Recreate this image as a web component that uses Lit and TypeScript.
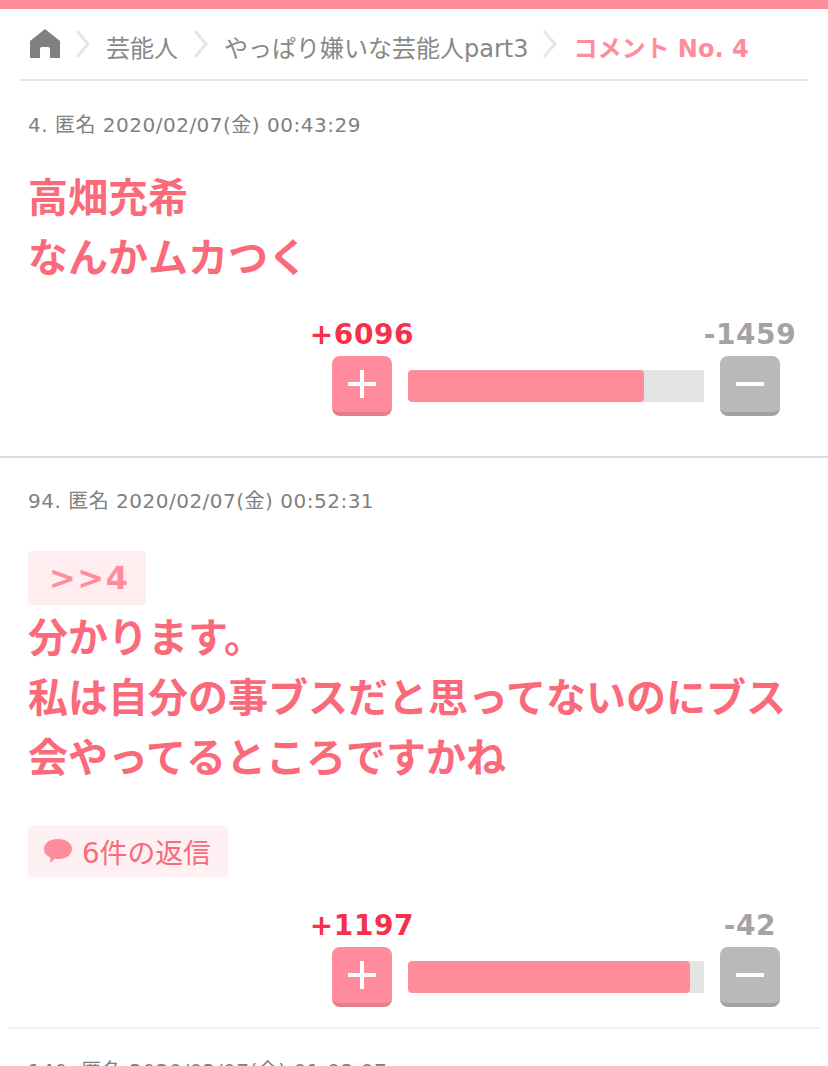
import { LitElement, html, css } from "lit";
import { customElement } from "lit/decorators.js";

interface Vote { plus: string; minus: string; pct: number; }

@customElement("app-root")
export class AppRoot extends LitElement {
  static styles = css`
    :host { display: block; background: #fff; height: 1066px; overflow: hidden;
      font-family: "DejaVu Sans", "Noto Sans CJK JP", sans-serif; }
    .top { height: 9px; background: #ff8c9b; }
    .crumbs { display: flex; align-items: center; height: 72px; margin: 0 20px; padding: 0 8px 0 9px;
      border-bottom: 2px solid #e8e8e8; box-sizing: border-box; font-size: 24px; color: #888; white-space: nowrap; }
    .crumbs span { padding-top: 4px; }
    .home { width: 32px; height: 32px; display: block; }
    .sep { width: 16px; height: 30px; margin: 0 15px 0 14px; display: block; }
    .sep.mid { margin-left: 15px; }
    .sep.last { margin: 0 16px 0 13px; }
    .cur { color: #ff8c9b; font-weight: 700; }
    .meta { font-size: 20px; line-height: 28px; color: #808080; letter-spacing: 0.5px; }
    .c1 .meta { padding-top: 30px; }
    .c2 .meta { padding-top: 29px; }
    .body { font-size: 40px; line-height: 60px; font-weight: 700; color: #fb6a7a; white-space: nowrap; }
    .c1 .body { margin-top: 29px; }
    .anchor { display: block; width: 118px; height: 54px; margin-top: 36px; box-sizing: border-box; padding-left: 21px;
      background: #ffedf0; border-radius: 4px; font-size: 32px; line-height: 54px; font-weight: 700;
      color: #ff8c9b; letter-spacing: 1.5px; }
    .c2 .body { margin-top: 3px; }
    .reply { display: flex; align-items: center; gap: 9px; width: 200px; height: 52px; box-sizing: border-box;
      padding-left: 15px; margin-top: 37px; background: #fff0f3; border-radius: 4px;
      font-size: 27.8px; color: #fb6a7a; }
    .bubble { width: 30px; height: 28px; display: block; }
    .votes { display: grid; grid-template-columns: 60px 1fr 60px; column-gap: 16px; row-gap: 5px; width: 448px;
      margin-left: auto; }
    .c1 .votes { margin-top: 31px; margin-right: 48px; }
    .c2 .votes { margin-top: 33px; margin-right: 40px; }
    .num { font-size: 28px; line-height: 32px; font-weight: 700; letter-spacing: 0.6px; justify-self: center; white-space: nowrap; }
    .p { color: #f5304a; grid-column: 1; }
    .m { color: #a3a3a3; grid-column: 3; }
    .btn { grid-row: 2; width: 60px; height: 60px; box-sizing: border-box; border-radius: 8px;
      display: flex; align-items: center; justify-content: center; color: #fff; }
    .btn svg { width: 28px; height: 28px; display: block; }
    .bp { background: #ff8c9b; border-bottom: 4px solid #e57e8c; grid-column: 1; }
    .bm { background: #b9b9b9; border-bottom: 4px solid #a2a2a2; grid-column: 3; }
    .track { grid-row: 2; grid-column: 2; height: 32px; align-self: start; margin-top: 14px; background: #e4e4e4;
      border-radius: 4px 0 0 4px; overflow: hidden; }
    .fill { height: 100%; background: #ff8c9b; border-radius: 4px; }
    .c1 { height: 377px; box-sizing: border-box; border-bottom: 2px solid #dcdcdc; }
    .c1 > .in, .c3 > .in { padding: 0 28px; }
    .c2 { height: 571px; box-sizing: border-box; margin: 0 8px; border-bottom: 2px solid #f0f0f0; }
    .c2 > .in { padding: 0 20px; }
    .c3 .meta { padding-top: 28px; }
  `;

  private vote(v: Vote) {
    return html`<div class="votes">
      <span class="num p">${v.plus}</span>
      <span class="num m">${v.minus}</span>
      <div class="btn bp"><svg viewBox="0 0 28 28"><path d="M12 0h4v12h12v4H16v12h-4V16H0v-4h12z" fill="currentColor"/></svg></div>
      <div class="track"><div class="fill" style="width:${v.pct}%"></div></div>
      <div class="btn bm"><svg viewBox="0 0 28 28"><rect x="0" y="12" width="28" height="4" fill="currentColor"/></svg></div>
    </div>`;
  }

  render() {
    const chev = (cls: string) => html`<svg class="sep ${cls}" viewBox="0 0 16 30"><path d="M2 2l11 13L2 28" fill="none" stroke="#e6e6e6" stroke-width="3"/></svg>`;
    return html`
      <div class="top"></div>
      <nav class="crumbs">
        <svg class="home" viewBox="0 0 32 32"><path d="M16 1L31 13v17H21V21a2 2 0 0 0-2-2h-6a2 2 0 0 0-2 2v9H1V13z" fill="#808080"/></svg>
        ${chev("")}<span>芸能人</span>${chev("mid")}<span>やっぱり嫌いな芸能人part3</span>${chev("last")}
        <span class="cur">コメント No. 4</span>
      </nav>
      <section class="c1"><div class="in">
        <div class="meta">4. 匿名 2020/02/07(金) 00:43:29</div>
        <div class="body">高畑充希<br />なんかムカつく</div>
      </div>${this.vote({ plus: "+6096", minus: "-1459", pct: 79.7 })}</section>
      <section class="c2"><div class="in">
        <div class="meta">94. 匿名 2020/02/07(金) 00:52:31</div>
        <span class="anchor">&gt;&gt;4</span>
        <div class="body">分かります。<br />私は自分の事ブスだと思ってないのにブス<br />会やってるところですかね</div>
        <div class="reply"><svg class="bubble" viewBox="0 0 30 28"><path d="M15 2c8 0 14 4 14 10s-6 10-13 10c-2 0-3 0-4-.5L7 26l.5-5.500C3.500 19 1 16 1 12 1 6 7 2 15 2z" fill="#ff8c9b"/></svg><span>6件の返信</span></div>
      </div>${this.vote({ plus: "+1197", minus: "-42", pct: 95.3 })}</section>
      <section class="c3"><div class="in"><div class="meta">140. 匿名 2020/02/07(金) 01:03:07</div></div></section>
    `;
  }
}
